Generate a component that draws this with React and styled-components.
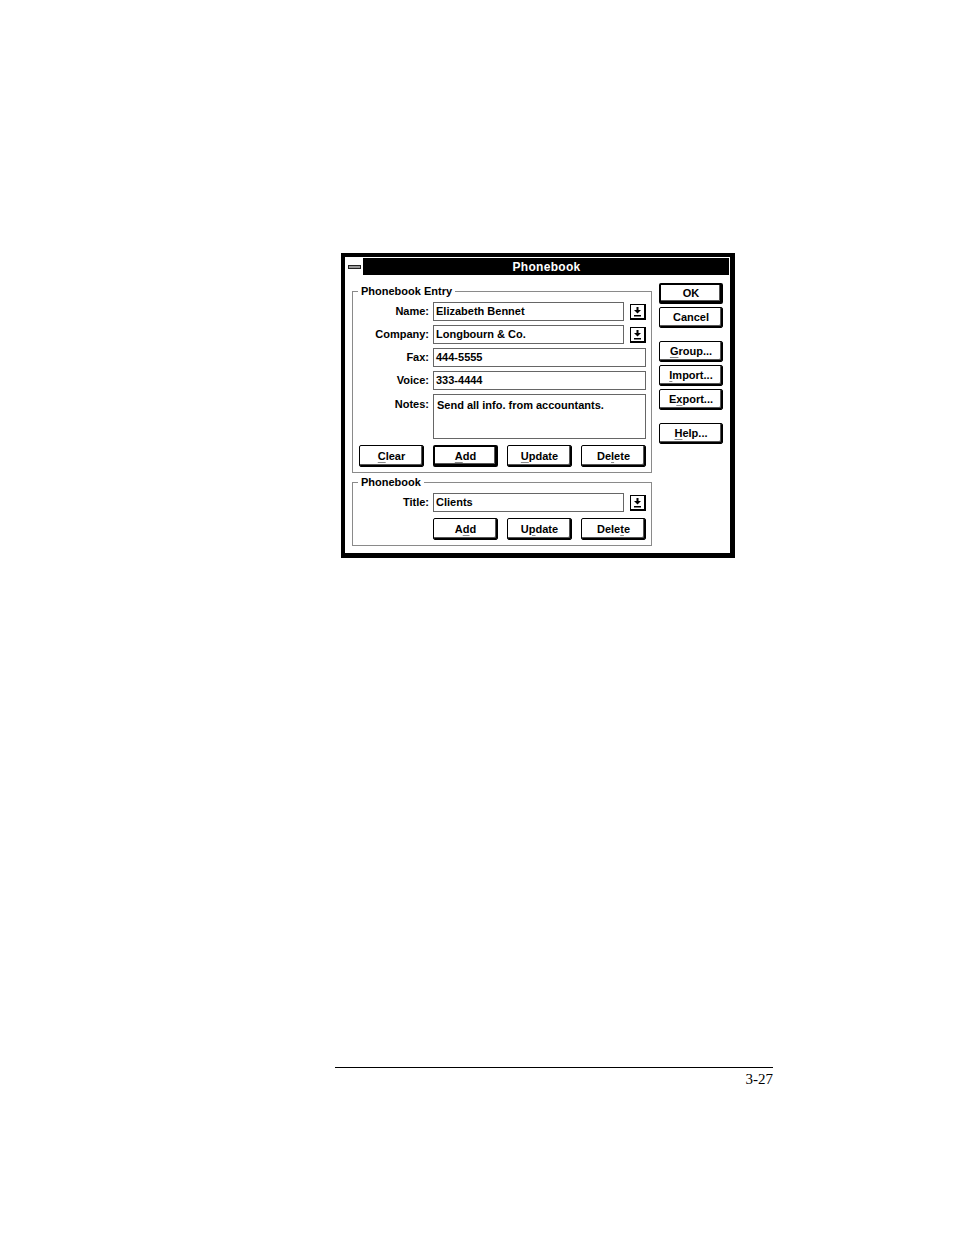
import React from 'react';
import styled, { createGlobalStyle } from 'styled-components';

const Global = createGlobalStyle`
  html, body { margin: 0; padding: 0; background: #fff; }
  body { font-family: "Liberation Sans", Arial, sans-serif; color: #000; }
  * { box-sizing: border-box; }
`;

const Page = styled.div`
  width: 954px;
  height: 1235px;
  padding-top: 253px;
  overflow: hidden;
`;

const Dialog = styled.div`
  margin-left: 341px;
  width: 394px;
  height: 305px;
  border-style: solid;
  border-color: #000;
  border-width: 4px 5px 5px 4px;
  padding: 1px;
  background: #fff;
  display: flex;
  flex-direction: column;
`;

const TitleBar = styled.div`
  height: 17px;
  background: #000;
  display: flex;
  align-items: stretch;
`;

const SysBox = styled.div`
  width: 18px;
  background: #fff;
  border-right: 1px solid #000;
  display: flex;
  align-items: center;
  justify-content: center;
`;

const SysBar = styled.div`
  width: 13px;
  height: 4px;
  border: 1px solid #222;
  background: #9a9a9a;
  margin-top: 1px;
`;

const TitleText = styled.div`
  flex: 1;
  color: #fff;
  font-weight: bold;
  font-size: 12px;
  letter-spacing: 0.3px;
  display: flex;
  align-items: center;
  justify-content: center;
`;

const Client = styled.div`
  flex: 1;
  display: flex;
  gap: 7px;
  padding: 8px 6px 6px 6px;
`;

const LeftCol = styled.div`
  width: 300px;
  padding-top: 2px;
  display: flex;
  flex-direction: column;
  gap: 3px;
`;

const Group = styled.fieldset`
  margin: 0;
  border: 1px solid #8a8a8a;
  padding: 4px 5px 5px 0;
  min-width: 0;
`;

const Legend = styled.legend`
  margin-left: 5px;
  padding: 0 3px;
  font-weight: bold;
  font-size: 11px;
  line-height: 13px;
`;

const FormGrid = styled.div`
  display: grid;
  grid-template-columns: 80px 191px 22px;
  row-gap: 4px;
  align-items: center;
`;

const Label = styled.div`
  font-weight: bold;
  font-size: 11px;
  line-height: 13px;
  text-align: right;
  padding-right: 4px;
  align-self: ${p => (p.$top ? 'start' : 'center')};
  padding-top: ${p => (p.$top ? '4px' : '0')};
`;

const Field = styled.div`
  height: ${p => p.$h || 19}px;
  border: 1px solid #666;
  background: #fff;
  font-weight: bold;
  font-size: 11px;
  line-height: 13px;
  padding: ${p => (p.$multi ? '4px 3px' : '2px 2px')};
  grid-column: ${p => (p.$wide ? '2 / 4' : '2 / 3')};
  white-space: nowrap;
  overflow: hidden;
`;

const DropBtn = styled.div`
  justify-self: end;
  width: 16px;
  height: 16px;
  border-style: solid;
  border-color: #000;
  border-width: 1px 2px 2px 1px;
  background: #fff;
  display: flex;
  align-items: center;
  justify-content: center;
`;

const ButtonRow = styled.div`
  display: grid;
  grid-template-columns: repeat(4, 65px);
  column-gap: 9px;
  padding-left: 6px;
  margin-top: 6px;
`;

const PushButton = styled.div`
  grid-column-start: ${p => p.$col || 'auto'};
  width: ${p => p.$w || 65}px;
  height: ${p => p.$h || 22}px;
  border: ${p => (p.$def ? '2px' : '1px')} solid #000;
  border-radius: 2px;
  box-shadow: inset -1px -1px 0 #000, inset -2px -2px 0 #555;
  background: #fff;
  font-weight: bold;
  font-size: 11px;
  display: flex;
  align-items: center;
  justify-content: center;
  padding-bottom: 1px;
`;

const Mn = styled.span`
  text-decoration: underline;
  text-decoration-color: #888;
  text-underline-offset: 2px;
`;

const RightCol = styled.div`
  width: 64px;
  display: flex;
  flex-direction: column;
  gap: 3px;
`;

const SideButton = styled(PushButton)`
  margin-top: ${p => (p.$sep ? '10px' : '0')};
`;

const Footer = styled.div`
  margin-top: 509px;
  margin-left: 335px;
  width: 438px;
  border-top: 1px solid #000;
  padding-top: 3px;
  text-align: right;
  font-family: "Liberation Serif", "Times New Roman", serif;
  font-size: 15px;
  line-height: 17px;
`;

const Arrow = () => (
  <svg width="13" height="13" viewBox="0 0 13 13">
    <rect x="5.5" y="2" width="2" height="3" fill="#000" />
    <polygon points="3,5 10,5 6.5,8.5" fill="#000" />
    <rect x="3" y="10" width="7" height="1.5" fill="#000" />
  </svg>
);

export default function App() {
  return (
    <Page>
      <Global />
      <Dialog>
        <TitleBar>
          <SysBox>
            <SysBar />
          </SysBox>
          <TitleText>Phonebook</TitleText>
        </TitleBar>
        <Client>
          <LeftCol>
            <Group>
              <Legend>Phonebook Entry</Legend>
              <FormGrid>
                <Label>Name:</Label>
                <Field>Elizabeth Bennet</Field>
                <DropBtn><Arrow /></DropBtn>
                <Label>Company:</Label>
                <Field>Longbourn &amp; Co.</Field>
                <DropBtn><Arrow /></DropBtn>
                <Label>Fax:</Label>
                <Field $wide>444-5555</Field>
                <Label>Voice:</Label>
                <Field $wide>333-4444</Field>
                <Label $top>Notes:</Label>
                <Field $wide $multi $h={45}>Send all info. from accountants.</Field>
              </FormGrid>
              <ButtonRow>
                <PushButton><Mn>C</Mn>lear</PushButton>
                <PushButton $def><Mn>A</Mn>dd</PushButton>
                <PushButton><Mn>U</Mn>pdate</PushButton>
                <PushButton>De<Mn>l</Mn>ete</PushButton>
              </ButtonRow>
            </Group>
            <Group>
              <Legend>Phonebook</Legend>
              <FormGrid>
                <Label>Title:</Label>
                <Field>Clients</Field>
                <DropBtn><Arrow /></DropBtn>
              </FormGrid>
              <ButtonRow>
                <PushButton $col={2}>A<Mn>d</Mn>d</PushButton>
                <PushButton>U<Mn>p</Mn>date</PushButton>
                <PushButton>Dele<Mn>t</Mn>e</PushButton>
              </ButtonRow>
            </Group>
          </LeftCol>
          <RightCol>
            <SideButton $w={64} $h={21} $def>OK</SideButton>
            <SideButton $w={64} $h={21}>Cancel</SideButton>
            <SideButton $w={64} $h={21} $sep><Mn>G</Mn>roup...</SideButton>
            <SideButton $w={64} $h={21}><Mn>I</Mn>mport...</SideButton>
            <SideButton $w={64} $h={21}>E<Mn>x</Mn>port...</SideButton>
            <SideButton $w={64} $h={21} $sep><Mn>H</Mn>elp...</SideButton>
          </RightCol>
        </Client>
      </Dialog>
      <Footer>3-27</Footer>
    </Page>
  );
}
